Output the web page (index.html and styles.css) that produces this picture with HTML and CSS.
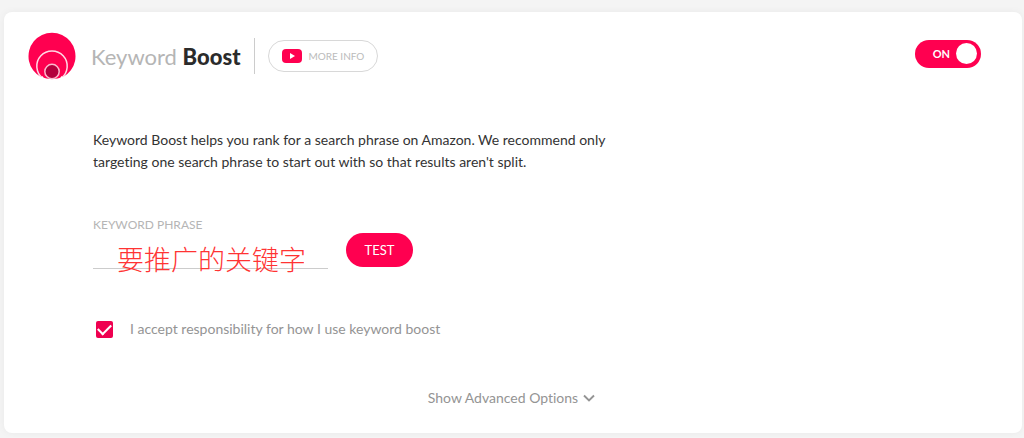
FILE: index.html
```html
<!DOCTYPE html>
<html lang="en">
<head>
<meta charset="utf-8">
<meta name="viewport" content="width=device-width, initial-scale=1">
<title>Keyword Boost</title>
<link rel="stylesheet" href="styles.css">
</head>
<body>
<main class="card">
  <header class="header">
    <svg class="logo" viewBox="0 0 48 48" aria-hidden="true">
      <path fill="#ff0050" d="M13 45A23.5 23.5 0 1 1 35 45Q24 49 13 45Z"/>
      <path fill="none" stroke="#fff" stroke-opacity=".85" stroke-width="1.5" d="M14.500 46A15.200 15.200 0 1 1 33.500 46"/>
      <path fill="#fff" d="M11 48L14.500 44L17 48ZM37 48L33.500 44L31 48Z"/>
      <circle cx="24" cy="39.500" r="7.200" fill="#b3003d" stroke="#fbb8cd" stroke-width="1.500"/>
    </svg>
    <h1 class="title">Keyword <strong>Boost</strong></h1>
    <div class="divider"></div>
    <button class="more" type="button">
      <svg class="play" viewBox="0 0 20 14" aria-hidden="true"><rect width="20" height="14" rx="4" fill="#ff0050"/><path fill="#fff" d="M8 4L13 7L8 10Z"/></svg>
      MORE INFO
    </button>
    <label class="switch"><input class="switch-input" type="checkbox" role="switch" checked><span class="switch-text">ON</span><span class="knob"></span></label>
  </header>
  <section class="content">
    <p class="intro">Keyword Boost helps you rank for a search phrase on Amazon. We recommend only targeting one search phrase to start out with so that results aren't split.</p>
    <form class="form">
      <div class="field">
        <label class="label" for="phrase">KEYWORD PHRASE</label>
        <input class="phrase" id="phrase" type="text" value="要推广的关键字">
      </div>
      <button class="test" type="button">TEST</button>
    </form>
    <label class="accept"><input class="check" type="checkbox" checked><span>I accept responsibility for how I use keyword boost</span></label>
  </section>
  <button class="advanced" type="button">Show Advanced Options
    <svg class="chevron" viewBox="0 0 12 8" aria-hidden="true"><path d="M1 1.500L6 6.500L11 1.500" fill="none" stroke="currentColor" stroke-width="1.900"/></svg>
  </button>
</main>
</body>
</html>
```
FILE: styles.css
```css
* { box-sizing: border-box; }
body {
  margin: 0;
  padding: 12px 2px 4px 4px;
  background: #f4f4f4;
  color: #333;
  font: 14px/22px Lato, "Noto Sans CJK SC", sans-serif;
  font-variant-ligatures: none;
}
button, input { font: inherit; font-variant-ligatures: none; }
button { cursor: pointer; }
.card {
  display: flex;
  flex-direction: column;
  padding: 20px 41px 24px 24px;
  border-radius: 8px;
  background: #fff;
  box-shadow: 0 0 6px #e9e9e9;
}
.header { display: flex; align-items: center; }
.logo { width: 48px; height: 48px; }
.title {
  margin: 0 14px 0 15px;
  padding-top: 2px;
  color: #b5b5b5;
  font-size: 22px;
  line-height: 32px;
  font-weight: 400;
}
.title strong { color: #2b2b2b; font-weight: 900; }
.divider { width: 1px; height: 36px; background: #ccc; }
.more {
  display: flex;
  align-items: center;
  gap: 6px;
  height: 32px;
  margin-left: 13px;
  padding: 0 13px;
  border: 1px solid #d8d8d8;
  border-radius: 16px;
  background: #fff;
  color: #bbb;
  font-size: 10px;
}
.play { width: 20px; height: 14px; }
.switch {
  display: flex;
  align-items: center;
  justify-content: flex-end;
  gap: 6px;
  width: 66px;
  height: 28px;
  margin: 0 0 5px auto;
  padding: 4px;
  border-radius: 14px;
  background: #ff0050;
  color: #fff;
  cursor: pointer;
}
.switch-input { appearance: none; width: 0; height: 0; margin: 0; }
.switch-text { font-size: 11px; font-weight: 700; }
.knob { width: 21px; height: 21px; border-radius: 50%; background: #fff; }
.content { margin: 49px 0 0 65px; }
.intro { max-width: 530px; margin: 0; }
.form { display: flex; align-items: flex-end; gap: 18px; margin-top: 41px; }
.field { display: flex; flex-direction: column; width: 235px; }
.label { color: #b5b5b5; font-size: 12px; }
.phrase {
  width: 100%;
  height: 44px;
  margin-bottom: -10px;
  padding: 0 24px;
  border: 0;
  background: linear-gradient(#ccc, #ccc) 0 32px / 100% 1px no-repeat;
  color: #f33;
  font: 300 27px "Noto Sans CJK SC", sans-serif;
}
.test {
  width: 67px;
  height: 34px;
  margin-bottom: 3px;
  padding: 0;
  border: 0;
  border-radius: 17px;
  background: #ff0050;
  color: #fff;
  font-size: 13px;
}
.accept { display: flex; align-items: center; gap: 17px; width: fit-content; margin-top: 48px; padding-left: 3px; color: #949494; }
.check {
  appearance: none;
  display: grid;
  place-items: center;
  width: 17px;
  height: 17px;
  margin: 0;
  border-radius: 2px;
  background: #ef0050;
}
.check:checked::before {
  content: "";
  width: 11px;
  height: 6px;
  margin-bottom: 3px;
  border: solid #fff;
  border-width: 0 0 2px 2px;
  transform: rotate(-45deg);
}
.advanced {
  display: flex;
  align-items: center;
  align-self: center;
  gap: 5px;
  margin: 47px 0 0 14px;
  padding: 0;
  border: 0;
  background: none;
  color: #949494;
}
.chevron { width: 12px; height: 8px; }
```
